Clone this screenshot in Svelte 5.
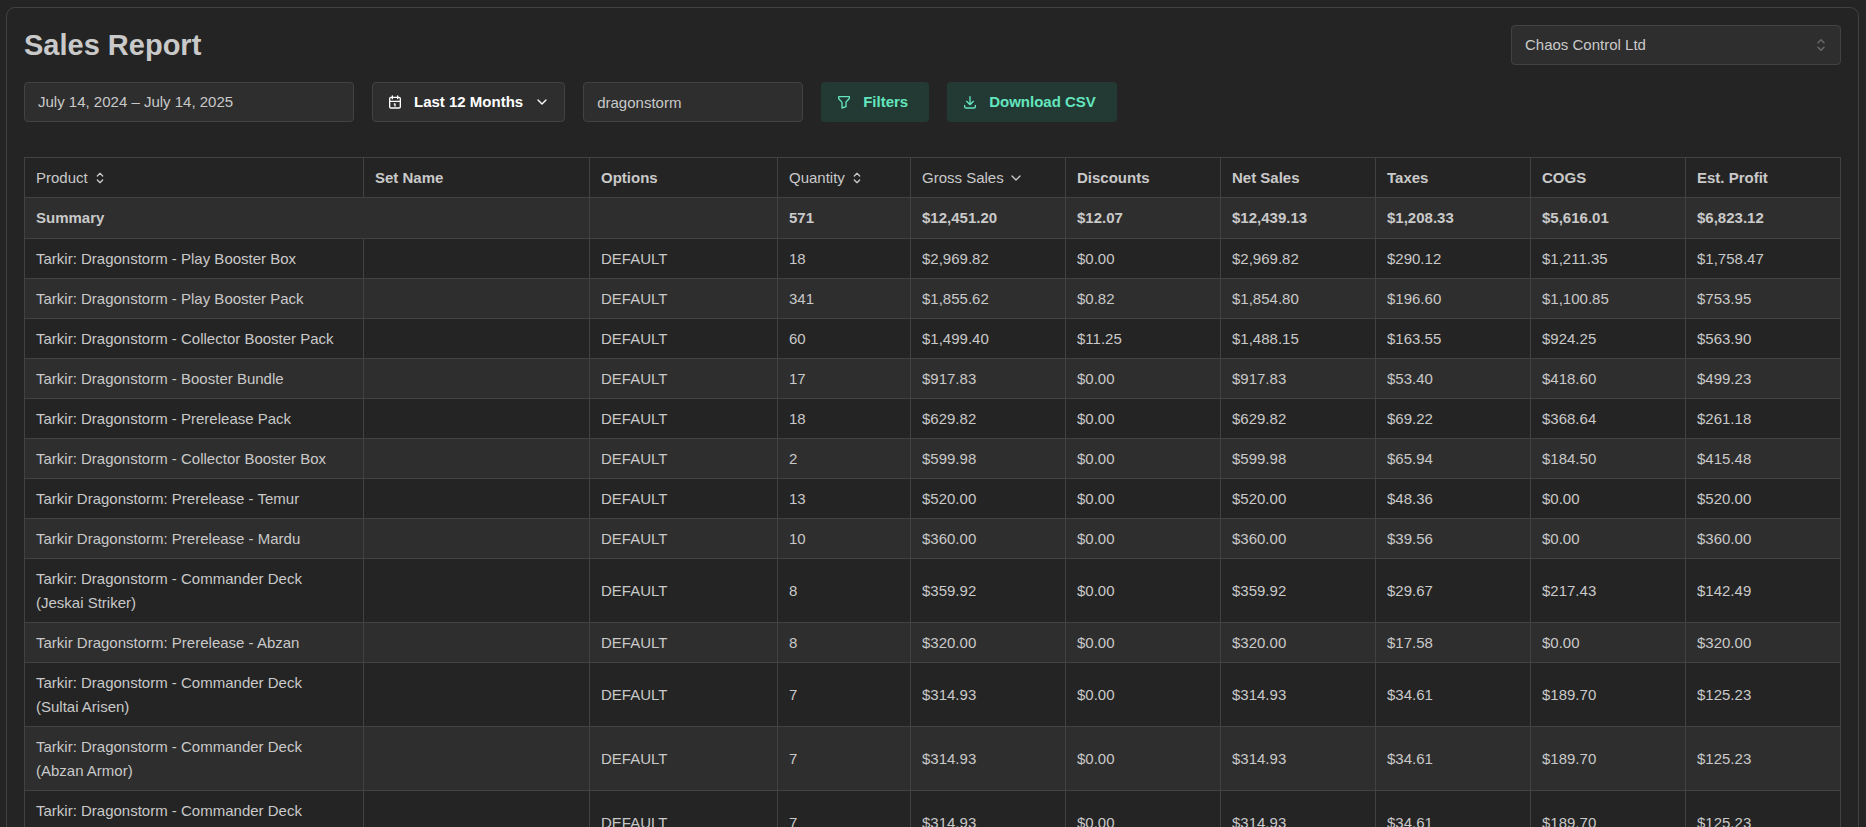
<script>
    const stores = ["Chaos Control Ltd"];

    const columns = [
        { key: "product", label: "Product", width: 339, sort: "none" },
        { key: "set", label: "Set Name", width: 226 },
        { key: "options", label: "Options", width: 188 },
        { key: "quantity", label: "Quantity", width: 133, sort: "none" },
        { key: "gross", label: "Gross Sales", width: 155, sort: "desc" },
        { key: "discounts", label: "Discounts", width: 155 },
        { key: "net", label: "Net Sales", width: 155 },
        { key: "taxes", label: "Taxes", width: 155 },
        { key: "cogs", label: "COGS", width: 155 },
        { key: "profit", label: "Est. Profit", width: 155 },
    ];
    const totalWidth = columns.reduce((sum, column) => sum + column.width, 0);

    const summary = ["571", "$12,451.20", "$12.07", "$12,439.13", "$1,208.33", "$5,616.01", "$6,823.12"];

    // product, set name, options, quantity, gross, discounts, net, taxes, cogs, profit
    const rows = [
        ["Tarkir: Dragonstorm - Play Booster Box", "", "DEFAULT", "18", "$2,969.82", "$0.00", "$2,969.82", "$290.12", "$1,211.35", "$1,758.47"],
        ["Tarkir: Dragonstorm - Play Booster Pack", "", "DEFAULT", "341", "$1,855.62", "$0.82", "$1,854.80", "$196.60", "$1,100.85", "$753.95"],
        ["Tarkir: Dragonstorm - Collector Booster Pack", "", "DEFAULT", "60", "$1,499.40", "$11.25", "$1,488.15", "$163.55", "$924.25", "$563.90"],
        ["Tarkir: Dragonstorm - Booster Bundle", "", "DEFAULT", "17", "$917.83", "$0.00", "$917.83", "$53.40", "$418.60", "$499.23"],
        ["Tarkir: Dragonstorm - Prerelease Pack", "", "DEFAULT", "18", "$629.82", "$0.00", "$629.82", "$69.22", "$368.64", "$261.18"],
        ["Tarkir: Dragonstorm - Collector Booster Box", "", "DEFAULT", "2", "$599.98", "$0.00", "$599.98", "$65.94", "$184.50", "$415.48"],
        ["Tarkir Dragonstorm: Prerelease - Temur", "", "DEFAULT", "13", "$520.00", "$0.00", "$520.00", "$48.36", "$0.00", "$520.00"],
        ["Tarkir Dragonstorm: Prerelease - Mardu", "", "DEFAULT", "10", "$360.00", "$0.00", "$360.00", "$39.56", "$0.00", "$360.00"],
        ["Tarkir: Dragonstorm - Commander Deck (Jeskai Striker)", "", "DEFAULT", "8", "$359.92", "$0.00", "$359.92", "$29.67", "$217.43", "$142.49"],
        ["Tarkir Dragonstorm: Prerelease - Abzan", "", "DEFAULT", "8", "$320.00", "$0.00", "$320.00", "$17.58", "$0.00", "$320.00"],
        ["Tarkir: Dragonstorm - Commander Deck (Sultai Arisen)", "", "DEFAULT", "7", "$314.93", "$0.00", "$314.93", "$34.61", "$189.70", "$125.23"],
        ["Tarkir: Dragonstorm - Commander Deck (Abzan Armor)", "", "DEFAULT", "7", "$314.93", "$0.00", "$314.93", "$34.61", "$189.70", "$125.23"],
        ["Tarkir: Dragonstorm - Commander Deck (Temur Roar)", "", "DEFAULT", "7", "$314.93", "$0.00", "$314.93", "$34.61", "$189.70", "$125.23"],
    ];

    let store = $state(stores[0]);
    let search = $state("dragonstorm");
</script>

{#snippet icon(name, size = 16)}
    <svg class="icon" width={size} height={size} viewBox="0 0 24 24" aria-hidden="true">
        {#if name === "calendar"}
            <path d="M4 7a2 2 0 0 1 2 -2h12a2 2 0 0 1 2 2v12a2 2 0 0 1 -2 2h-12a2 2 0 0 1 -2 -2z" />
            <path d="M16 3v4M8 3v4M4 11h16M11 15h1v3" />
        {:else if name === "filter"}
            <path d="M4 4h16v2.172a2 2 0 0 1 -.586 1.414l-4.414 4.414v7l-6 2v-8.5l-4.48 -4.928a2 2 0 0 1 -.52 -1.345z" />
        {:else if name === "download"}
            <path d="M4 17v2a2 2 0 0 0 2 2h12a2 2 0 0 0 2 -2v-2M7 11l5 5l5 -5M12 4v12" />
        {:else if name === "selector"}
            <path d="M8 9l4 -4l4 4M16 15l-4 4l-4 -4" />
        {:else}
            <path d="M6 9l6 6l6 -6" />
        {/if}
    </svg>
{/snippet}

<main class="card">
    <header class="title-row">
        <h1>Sales Report</h1>
        <div class="select-wrap">
            <select class="field" aria-label="Store" bind:value={store}>
                {#each stores as name}
                    <option value={name}>{name}</option>
                {/each}
            </select>
            <span class="select-icon">{@render icon("selector", 18)}</span>
        </div>
    </header>

    <div class="toolbar">
        <button type="button" class="field date-range">July 14, 2024 – July 14, 2025</button>
        <button type="button" class="btn btn-default">
            {@render icon("calendar")}
            Last 12 Months
            {@render icon("chevron")}
        </button>
        <input type="text" class="field search" aria-label="Search products" bind:value={search} />
        <button type="button" class="btn btn-light">
            {@render icon("filter")}
            Filters
        </button>
        <button type="button" class="btn btn-light">
            {@render icon("download")}
            Download CSV
        </button>
    </div>

    <table>
        <colgroup>
            {#each columns as column}
                <col style="width: {(column.width / totalWidth) * 100}%" />
            {/each}
        </colgroup>
        <thead>
            <tr>
                {#each columns as column}
                    <th scope="col" aria-sort={column.sort === "desc" ? "descending" : undefined}>
                        {#if column.sort}
                            <button type="button" class="sort">
                                {column.label}
                                {@render icon(column.sort === "desc" ? "chevron" : "selector")}
                            </button>
                        {:else}
                            {column.label}
                        {/if}
                    </th>
                {/each}
            </tr>
        </thead>
        <tbody>
            <tr class="summary">
                <th scope="row" colspan="2">Summary</th>
                <td></td>
                {#each summary as value}
                    <td>{value}</td>
                {/each}
            </tr>
            {#each rows as row}
                <tr>
                    {#each row as value}
                        <td>{value}</td>
                    {/each}
                </tr>
            {/each}
        </tbody>
    </table>
</main>

<style>
    :global(body) {
        background-color: #242424;
        color: #c9c9c9;
        font-family: "Liberation Sans", Arial, sans-serif;
        font-size: 15px;
        line-height: 24px;
    }
    /* the report scrolls without a visible bar */
    :global(html) {
        scrollbar-width: none;
    }
    .card {
        margin: 7px 7px 7px 6px;
        padding: 17px;
        border: 1px solid #424242;
        border-radius: 9px;
    }
    .icon {
        display: block;
        flex: none;
        fill: none;
        stroke: currentColor;
        stroke-width: 2;
        stroke-linecap: round;
        stroke-linejoin: round;
    }
    .title-row {
        display: flex;
        align-items: center;
        justify-content: space-between;
        margin-bottom: 17px;
    }
    h1 {
        margin: 0;
        font-size: 29px;
        line-height: 40px;
        font-weight: 700;
    }
    .toolbar {
        display: flex;
        flex-wrap: wrap;
        gap: 18px;
        margin-bottom: 35px;
    }
    .field,
    .btn {
        box-sizing: border-box;
        height: 40px;
        border: 1px solid #424242;
        border-radius: 4px;
        background-color: #2e2e2e;
        color: inherit;
        font: inherit;
    }
    .field {
        padding: 0 13px;
        text-align: left;
    }
    .select-wrap {
        position: relative;
        width: 330px;
    }
    .select-wrap select {
        display: block;
        width: 100%;
        appearance: none;
    }
    .select-icon {
        position: absolute;
        top: 11px;
        right: 11px;
        color: #696969;
        pointer-events: none;
    }
    .date-range {
        width: 330px;
    }
    .search {
        width: 220px;
    }
    .btn {
        display: flex;
        align-items: center;
        gap: 11px;
        padding: 0 14px;
        font-weight: 600;
        cursor: pointer;
    }
    .btn-default {
        color: #fff;
    }
    .btn-light {
        padding-right: 20px;
        border-color: transparent;
        background-color: #233933;
        color: #63e6be;
    }
    table {
        width: 100%;
        table-layout: fixed;
        border-collapse: collapse;
    }
    th,
    td {
        padding: 8px 11px 7px;
        border: 1px solid #424242;
        text-align: left;
        vertical-align: middle;
    }
    td:first-child {
        padding-right: 18px;
    }
    thead th {
        font-weight: 700;
    }
    .summary th,
    .summary td {
        padding-bottom: 8px;
        font-weight: 700;
    }
    tbody tr:nth-child(odd) {
        background-color: #2e2e2e;
    }
    .sort {
        display: flex;
        align-items: center;
        gap: 4px;
        padding: 0;
        border: none;
        background: none;
        color: inherit;
        font: inherit;
        font-weight: 400;
        cursor: pointer;
    }
</style>
